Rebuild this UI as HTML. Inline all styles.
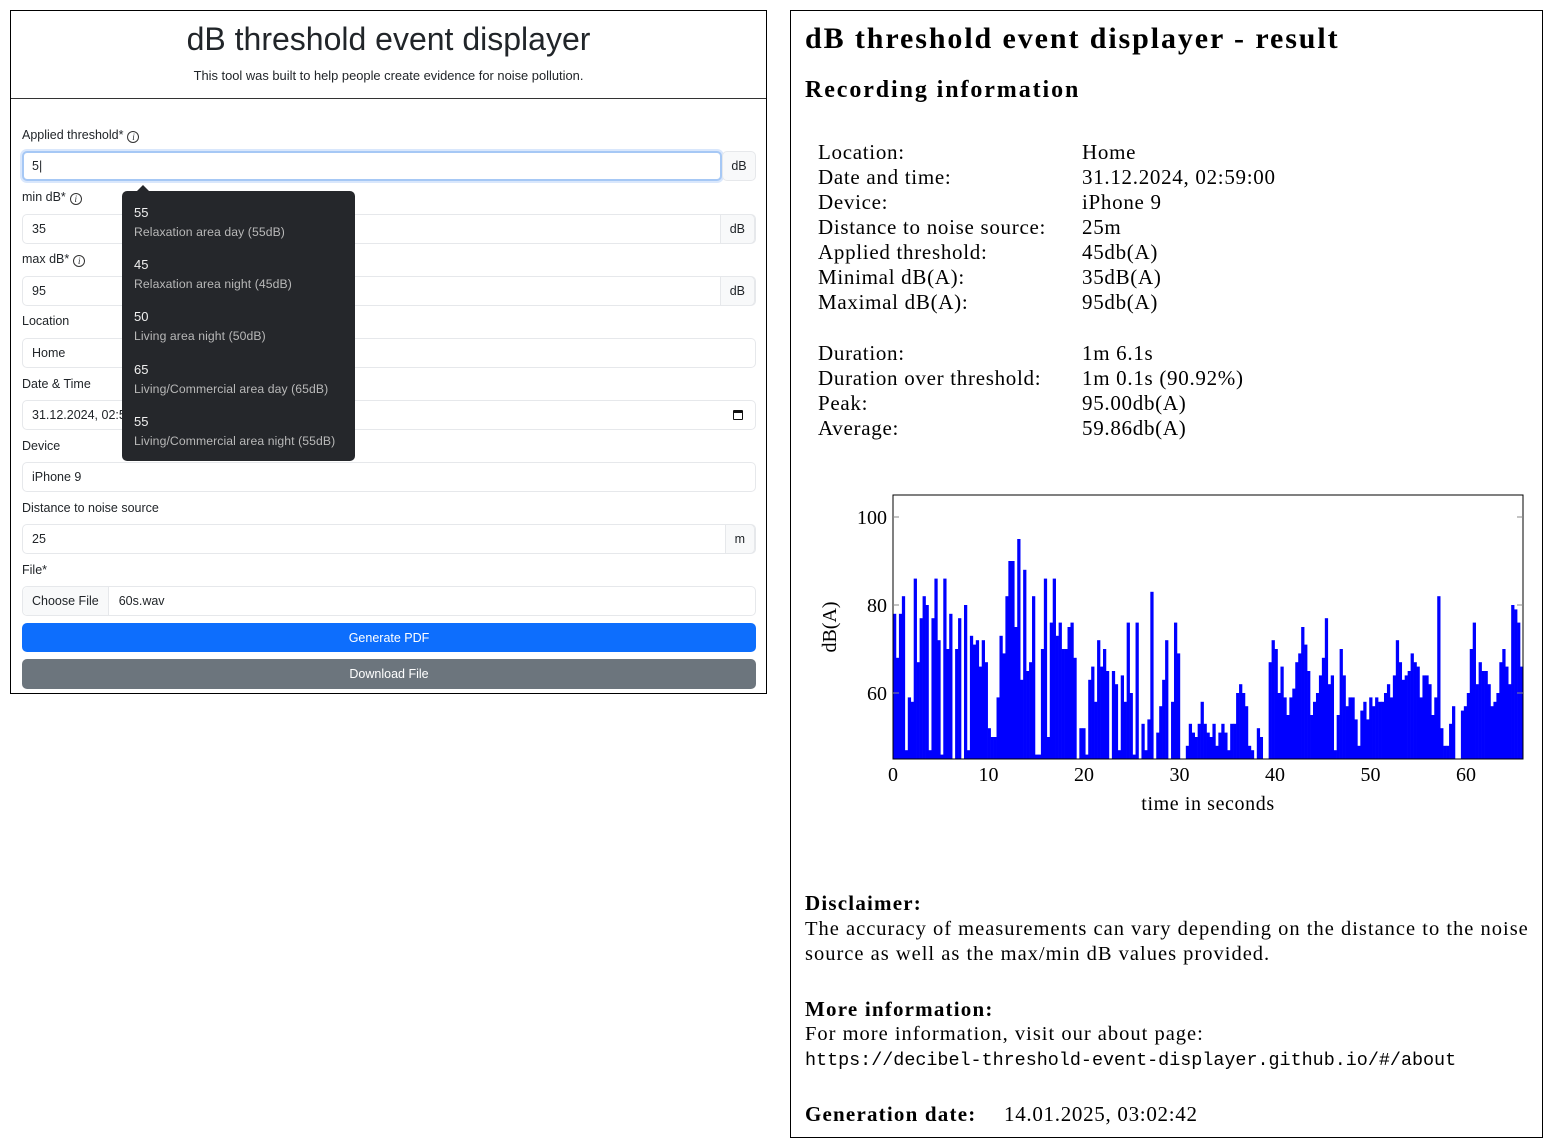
<!DOCTYPE html>
<html><head><meta charset="utf-8"><style>
*{box-sizing:border-box;margin:0;padding:0}
body{width:1553px;height:1148px;background:#fff;position:relative;overflow:hidden;font-family:"Liberation Sans",sans-serif;color:#212529}
.a{position:absolute;white-space:nowrap}
#left{position:absolute;left:10px;top:10px;width:757px;height:684px;border:1px solid #000}
.lbl{position:absolute;left:11px;font-size:12.5px;line-height:16px}
.inp{position:absolute;left:11px;width:734px;height:30px;border:1px solid #e6e8eb;border-radius:5px;font-size:12.5px;line-height:28px;padding-left:9px;background:#fff}
.add{position:absolute;right:0;top:-1px;height:30px;border:1px solid #e6e8eb;border-radius:0 5px 5px 0;background:#f8f9fa;padding:0 9px;line-height:28px}
.info{display:inline-block;width:12px;height:12px;border:1px solid #333;border-radius:50%;font-size:9px;line-height:10px;text-align:center;font-family:"Liberation Serif",serif;font-style:italic;vertical-align:-1px;margin-left:4px}
#tip{position:absolute;left:111px;top:180px;width:233px;height:270px;background:#25272b;border-radius:5px;color:#fff;font-size:12.2px}
#tip .n{position:absolute;left:12px;font-size:13px;color:#f0f0f0}
#tip .d{position:absolute;left:12px;color:#b8b8b8;letter-spacing:.1px}
#right{position:absolute;left:790px;top:10px;width:753px;height:1128px;border:1px solid #000;font-family:"Liberation Serif",serif;color:#000}
.r{position:absolute;font-size:21px;line-height:25px;white-space:nowrap;letter-spacing:.7px}
</style></head><body>
<div id="left">
 <div class="a" style="left:0;width:755px;text-align:center;top:10px;font-size:32px;line-height:36px">dB threshold event displayer</div>
 <div class="a" style="left:0;width:755px;text-align:center;top:57px;font-size:12.9px">This tool was built to help people create evidence for noise pollution.</div>
 <div style="position:absolute;left:0;top:87px;width:755px;border-top:1px solid #333"></div>

 <div class="lbl" style="top:116px">Applied threshold*<span class="info">i</span></div>
 <div class="inp" style="top:140px;width:700px;border:2px solid #a6c8f5;box-shadow:0 0 0 2px #d9e7fc;line-height:26px;padding-left:8px">5|</div>
 <div class="inp" style="top:140px;left:711px;width:34px;padding:0;background:#f8f9fa;text-align:center">dB</div>

 <div class="lbl" style="top:178px">min dB*<span class="info">i</span></div>
 <div class="inp" style="top:203px">35<span class="add">dB</span></div>
 <div class="lbl" style="top:240px">max dB*<span class="info">i</span></div>
 <div class="inp" style="top:265px">95<span class="add">dB</span></div>
 <div class="lbl" style="top:302px">Location</div>
 <div class="inp" style="top:327px">Home</div>
 <div class="lbl" style="top:365px">Date &amp; Time</div>
 <div class="inp" style="top:389px">31.12.2024, 02:59<span style="position:absolute;right:12px;top:9px;width:10px;height:10px;border:1.5px solid #111;border-top-width:3px;border-radius:1px"></span></div>
 <div class="lbl" style="top:427px">Device</div>
 <div class="inp" style="top:451px">iPhone 9</div>
 <div class="lbl" style="top:489px">Distance to noise source</div>
 <div class="inp" style="top:513px">25<span class="add">m</span></div>
 <div class="lbl" style="top:551px">File*</div>
 <div class="inp" style="top:575px;padding-left:0"><span style="display:inline-block;height:28px;padding:0 9px;background:#f8f9fa;border-right:1px solid #e6e8eb;border-radius:5px 0 0 5px">Choose File</span><span style="padding-left:10px">60s.wav</span></div>
 <div class="inp" style="top:612px;height:29px;background:#0d6efd;border-color:#0d6efd;color:#fff;text-align:center;padding:0">Generate PDF</div>
 <div class="inp" style="top:648px;height:30px;background:#6c757d;border-color:#6c757d;color:#fff;text-align:center;padding:0">Download File</div>

 <div id="tip">
  <div style="position:absolute;left:14px;top:-6px;width:0;height:0;border-left:7px solid transparent;border-right:7px solid transparent;border-bottom:7px solid #25272b"></div>
  <div class="n" style="top:14px">55</div><div class="d" style="top:34px">Relaxation area day (55dB)</div>
  <div class="n" style="top:66px">45</div><div class="d" style="top:86px">Relaxation area night (45dB)</div>
  <div class="n" style="top:118px">50</div><div class="d" style="top:138px">Living area night (50dB)</div>
  <div class="n" style="top:171px">65</div><div class="d" style="top:191px">Living/Commercial area day (65dB)</div>
  <div class="n" style="top:223px">55</div><div class="d" style="top:243px">Living/Commercial area night (55dB)</div>
 </div>
</div>

<div id="right">
 <div class="a" style="left:14px;top:10px;font-size:30px;line-height:36px;font-weight:bold;letter-spacing:1.9px">dB threshold event displayer - result</div>
 <div class="a" style="left:14px;top:64px;font-size:24px;line-height:30px;font-weight:bold;letter-spacing:1.9px">Recording information</div>
 <div class="r" style="left:27px;top:129px">Location:<br>Date and time:<br>Device:<br>Distance to noise source:<br>Applied threshold:<br>Minimal dB(A):<br>Maximal dB(A):</div>
 <div class="r" style="left:291px;top:129px">Home<br>31.12.2024, 02:59:00<br>iPhone 9<br>25m<br>45db(A)<br>35dB(A)<br>95db(A)</div>
 <div class="r" style="left:27px;top:330px">Duration:<br>Duration over threshold:<br>Peak:<br>Average:</div>
 <div class="r" style="left:291px;top:330px">1m 6.1s<br>1m 0.1s (90.92%)<br>95.00db(A)<br>59.86db(A)</div>

 <svg style="position:absolute;left:0;top:0" width="753" height="830">
  <g id="bars" fill="#0000ff"></g>
  <rect x="102" y="484" width="630" height="264" fill="none" stroke="#000" stroke-width="1"/>
  <g stroke="#888" stroke-width="1">
   <line x1="102" y1="506" x2="108" y2="506"/><line x1="726" y1="506" x2="732" y2="506"/>
   <line x1="102" y1="594" x2="108" y2="594"/><line x1="726" y1="594" x2="732" y2="594"/>
   <line x1="102" y1="682" x2="108" y2="682"/><line x1="726" y1="682" x2="732" y2="682"/>
  </g>
  <g font-family="Liberation Serif,serif" font-size="20" fill="#000">
   <text x="96" y="513" text-anchor="end">100</text>
   <text x="96" y="601" text-anchor="end">80</text>
   <text x="96" y="689" text-anchor="end">60</text>
   <text x="102" y="770" text-anchor="middle">0</text>
   <text x="197.5" y="770" text-anchor="middle">10</text>
   <text x="293" y="770" text-anchor="middle">20</text>
   <text x="388.5" y="770" text-anchor="middle">30</text>
   <text x="484" y="770" text-anchor="middle">40</text>
   <text x="579.5" y="770" text-anchor="middle">50</text>
   <text x="675" y="770" text-anchor="middle">60</text>
   <text x="417" y="799" text-anchor="middle" letter-spacing="0.6">time in seconds</text>
   <text transform="translate(45,616) rotate(-90)" text-anchor="middle">dB(A)</text>
  </g>
 </svg>

 <div class="r" style="left:14px;top:880px;font-weight:bold;letter-spacing:1.2px">Disclaimer:</div>
 <div class="r" style="left:14px;top:906px;font-size:20.5px;letter-spacing:1px">The accuracy of measurements can vary depending on the distance to the noise<br>source as well as the max/min dB values provided.</div>
 <div class="r" style="left:14px;top:986px;font-weight:bold;letter-spacing:1.2px">More information:</div>
 <div class="r" style="left:14px;top:1011px;font-size:20.5px;letter-spacing:1px">For more information, visit our about page:</div>
 <div class="r" style="left:14px;top:1037px;font-family:'Liberation Mono',monospace;font-size:18.4px;letter-spacing:0">https://decibel-threshold-event-displayer.github.io/#/about</div>
 <div class="r" style="left:14px;top:1091px"><b style="letter-spacing:1.2px">Generation date:</b><span style="position:absolute;left:199px">14.01.2025, 03:02:42</span></div>
</div>
<script>
var v=[78,68,78,82,47,59,58,86,67,77,82,80,47,77,86,72,46,86,70,78,45,70,77,45,80,47,73,71,72,66,72,67,52,50,50,59,73,69,82,90,90,75,95,63,88,65,67,82,46,46,70,86,50,76,86,73,76,70,70,75,76,68,45,52,52,46,63,66,58,72,66,70,65,45,65,62,47,64,58,76,60,46,76,45,53,47,54,83,45,51,57,63,72,45,58,76,69,45,45,48,53,51,50,53,58,53,51,50,53,48,51,53,51,47,53,53,60,62,60,57,48,47,45,52,50,45,45,67,72,70,60,66,59,55,59,61,67,69,75,71,65,55,58,60,64,68,77,62,64,47,55,70,64,57,59,59,54,48,56,58,54,59,57,59,58,58,60,62,59,64,72,67,63,64,65,69,67,66,59,64,64,62,55,59,82,52,48,48,53,57,45,45,56,57,60,70,76,62,67,65,65,62,57,58,60,67,70,66,62,80,79,76,66];
var w=630/v.length,s='';
for(var i=0;i<v.length;i++){if(v[i]<=45)continue;var y=748-(v[i]-45)*4.4;s+='<rect x="'+(102+i*w).toFixed(2)+'" y="'+y.toFixed(1)+'" width="'+(w+0.3).toFixed(2)+'" height="'+(748-y).toFixed(1)+'"/>';}
document.getElementById('bars').innerHTML=s;
</script>
</body></html>
